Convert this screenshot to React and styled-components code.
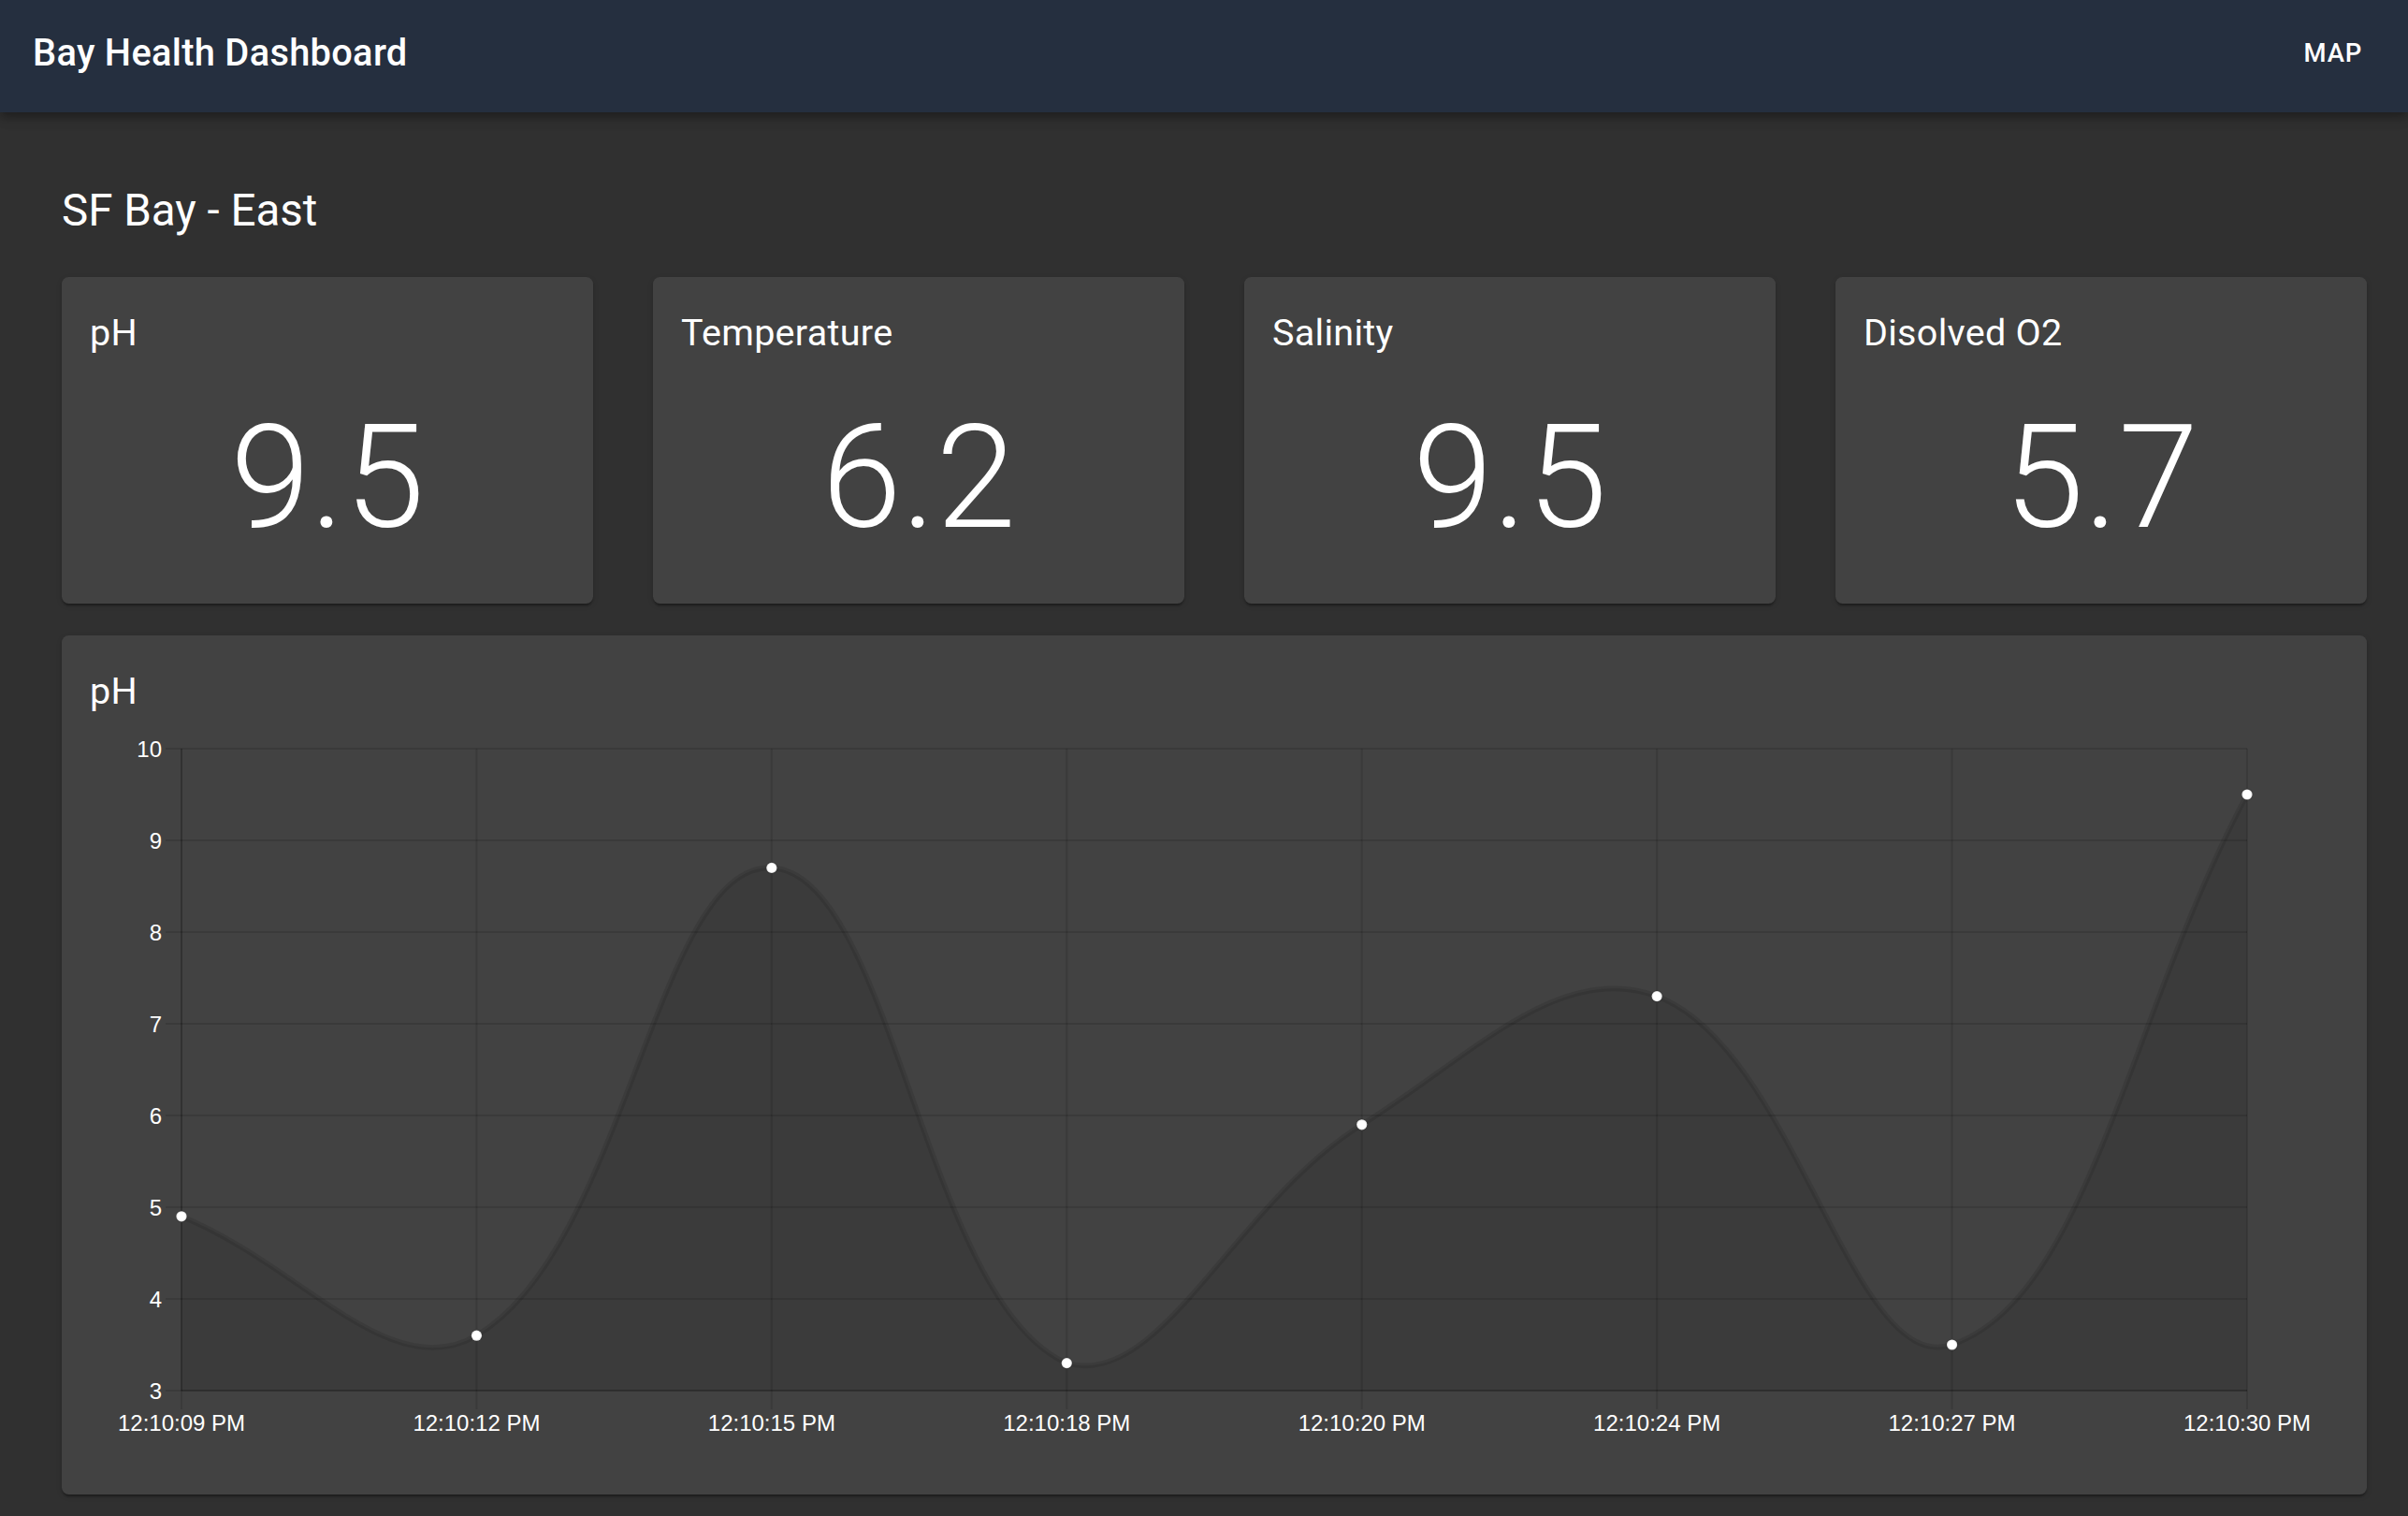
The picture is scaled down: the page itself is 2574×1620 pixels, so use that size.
import React from 'react';
import styled, { createGlobalStyle } from 'styled-components';

const GlobalStyle = createGlobalStyle`
  html, body {
    margin: 0;
    padding: 0;
    background: #303030;
  }
  body {
    font-family: Roboto, "Liberation Sans", Arial, sans-serif;
    color: #ffffff;
  }
  * { box-sizing: border-box; }
`;

const Page = styled.div`
  min-height: 1620px;
  background: #303030;
`;

const AppBar = styled.header`
  position: relative;
  z-index: 1;
  height: 120px;
  background: #252f3f;
  display: flex;
  align-items: center;
  justify-content: space-between;
  padding: 0 34px 6px 35px;
  box-shadow: 0px 4px 8px -2px rgba(0, 0, 0, 0.2),
    0px 8px 10px 0px rgba(0, 0, 0, 0.14),
    0px 2px 19px 0px rgba(0, 0, 0, 0.12);
`;

const Brand = styled.h1`
  margin: 0;
  font-size: 39.8px;
  font-weight: 500;
  line-height: 64px;
  letter-spacing: 0.0075em;
  color: #ffffff;
`;

const NavButton = styled.button`
  background: none;
  border: none;
  color: #ffffff;
  font-family: Roboto, "Liberation Sans", Arial, sans-serif;
  font-size: 27.5px;
  font-weight: 500;
  letter-spacing: 0.02857em;
  text-transform: uppercase;
  padding: 11px 15px;
  line-height: 1.75;
  cursor: pointer;
`;

const Main = styled.main`
  padding: 75px 44px 23px 66px;
`;

const Heading = styled.h2`
  margin: 0 0 41px;
  font-size: 47.5px;
  font-weight: 400;
  line-height: 60px;
  color: #ffffff;
`;

const StatGrid = styled.div`
  display: grid;
  grid-template-columns: repeat(4, 1fr);
  column-gap: 64px;
  margin-bottom: 34px;
`;

const Card = styled.section`
  background: #424242;
  border-radius: 7.5px;
  box-shadow: 0px 4px 2px -2px rgba(0, 0, 0, 0.2),
    0px 2px 2px 0px rgba(0, 0, 0, 0.14),
    0px 2px 6px 0px rgba(0, 0, 0, 0.12);
  padding: ${(p) => (p.$chart ? '30px' : '30px 30px 44px')};
`;

const CardTitle = styled.h3`
  margin: 0;
  font-size: 39.5px;
  font-weight: 400;
  line-height: 60px;
  letter-spacing: 0.0075em;
  color: #ffffff;
`;

const Value = styled.div`
  margin-top: 35px;
  font-size: 154px;
  font-weight: 300;
  line-height: 180px;
  text-align: center;
  color: #ffffff;
`;

const ChartSvg = styled.svg`
  display: block;
  width: 100%;
  height: 798px;
`;

const TickLabel = styled.text`
  font-family: "Liberation Sans", Arial, Helvetica, sans-serif;
  font-size: 24px;
  fill: #ffffff;
`;

const stats = [
  { label: 'pH', value: '9.5' },
  { label: 'Temperature', value: '6.2' },
  { label: 'Salinity', value: '9.5' },
  { label: 'Disolved O2', value: '5.7' },
];

const series = [
  { t: '12:10:09 PM', v: 4.9 },
  { t: '12:10:12 PM', v: 3.6 },
  { t: '12:10:15 PM', v: 8.7 },
  { t: '12:10:18 PM', v: 3.3 },
  { t: '12:10:20 PM', v: 5.9 },
  { t: '12:10:24 PM', v: 7.3 },
  { t: '12:10:27 PM', v: 3.5 },
  { t: '12:10:30 PM', v: 9.5 },
];

const W = 2404;
const H = 798;
const area = { left: 98, right: 2306, top: 31, bottom: 717 };
const yMin = 3;
const yMax = 10;

const xAt = (i) => area.left + (i * (area.right - area.left)) / (series.length - 1);
const yAt = (v) => area.bottom - ((v - yMin) / (yMax - yMin)) * (area.bottom - area.top);

const cap = (pt) => ({
  x: Math.min(Math.max(pt.x, area.left), area.right),
  y: Math.min(Math.max(pt.y, area.top), area.bottom),
});

function buildPaths() {
  const pts = series.map((d, i) => ({ x: xAt(i), y: yAt(d.v) }));
  const t = 0.4;
  const ctrl = pts.map((cur, i) => {
    const prev = i > 0 ? pts[i - 1] : pts[0];
    const next = i < pts.length - 1 ? pts[i + 1] : pts[pts.length - 1];
    const d01 = Math.hypot(cur.x - prev.x, cur.y - prev.y);
    const d12 = Math.hypot(next.x - cur.x, next.y - cur.y);
    let s01 = d01 / (d01 + d12);
    let s12 = d12 / (d01 + d12);
    if (Number.isNaN(s01)) s01 = 0;
    if (Number.isNaN(s12)) s12 = 0;
    const fa = t * s01;
    const fb = t * s12;
    return {
      prev: cap({ x: cur.x - fa * (next.x - prev.x), y: cur.y - fa * (next.y - prev.y) }),
      next: cap({ x: cur.x + fb * (next.x - prev.x), y: cur.y + fb * (next.y - prev.y) }),
    };
  });
  let d = `M ${pts[0].x} ${pts[0].y}`;
  for (let i = 1; i < pts.length; i++) {
    const c1 = ctrl[i - 1].next;
    const c2 = ctrl[i].prev;
    d += ` C ${c1.x} ${c1.y} ${c2.x} ${c2.y} ${pts[i].x} ${pts[i].y}`;
  }
  const fill = `${d} L ${pts[pts.length - 1].x} ${area.bottom} L ${pts[0].x} ${area.bottom} Z`;
  return { pts, line: d, fill };
}

const gridColor = 'rgba(0,0,0,0.12)';
const axisColor = 'rgba(0,0,0,0.14)';

function LineChart() {
  const { pts, line, fill } = buildPaths();
  const yTicks = [10, 9, 8, 7, 6, 5, 4, 3];
  return (
    <ChartSvg viewBox={`0 0 ${W} ${H}`} preserveAspectRatio="none">
      {yTicks.map((v) => (
        <line
          key={`h${v}`}
          x1={81}
          x2={area.right}
          y1={yAt(v)}
          y2={yAt(v)}
          stroke={gridColor}
          strokeWidth={2}
        />
      ))}
      {series.map((d, i) => (
        <line
          key={`v${i}`}
          x1={xAt(i)}
          x2={xAt(i)}
          y1={area.top}
          y2={737}
          stroke={gridColor}
          strokeWidth={2}
        />
      ))}
      <line x1={area.left} x2={area.left} y1={area.top} y2={area.bottom} stroke={axisColor} strokeWidth={2} />
      <line x1={area.left} x2={area.right} y1={area.bottom} y2={area.bottom} stroke={axisColor} strokeWidth={2} />
      <path d={fill} fill="rgba(0,0,0,0.1)" />
      <path d={line} fill="none" stroke="rgba(0,0,0,0.1)" strokeWidth={5.6} />
      {pts.map((p, i) => (
        <circle key={`p${i}`} cx={p.x} cy={p.y} r={5.6} fill="#ffffff" stroke="rgba(0,0,0,0.1)" strokeWidth={1.9} />
      ))}
      {yTicks.map((v) => (
        <TickLabel key={`yl${v}`} x={77} y={yAt(v)} textAnchor="end" dominantBaseline="central">
          {v}
        </TickLabel>
      ))}
      {series.map((d, i) => (
        <TickLabel key={`xl${i}`} x={xAt(i)} y={751} textAnchor="middle" dominantBaseline="central">
          {d.t}
        </TickLabel>
      ))}
    </ChartSvg>
  );
}

export default function App() {
  return (
    <Page>
      <GlobalStyle />
      <AppBar>
        <Brand>Bay Health Dashboard</Brand>
        <NavButton type="button">Map</NavButton>
      </AppBar>
      <Main>
        <Heading>SF Bay - East</Heading>
        <StatGrid>
          {stats.map((s) => (
            <Card key={s.label}>
              <CardTitle>{s.label}</CardTitle>
              <Value>{s.value}</Value>
            </Card>
          ))}
        </StatGrid>
        <Card $chart>
          <CardTitle>pH</CardTitle>
          <LineChart />
        </Card>
      </Main>
    </Page>
  );
}
